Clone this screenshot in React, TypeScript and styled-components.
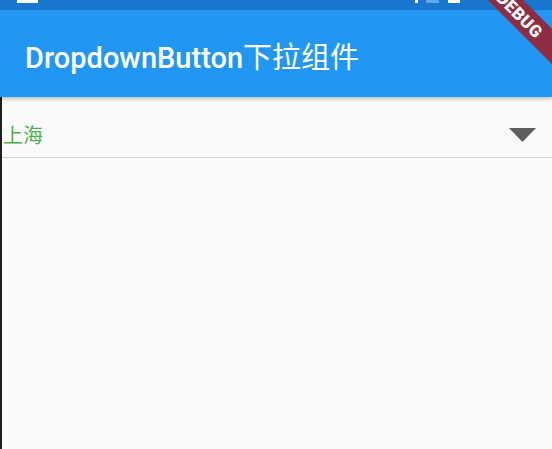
import React from "react";
import styled, { createGlobalStyle } from "styled-components";

const GlobalStyle = createGlobalStyle`
  html, body {
    margin: 0;
    padding: 0;
    background: #fafafa;
  }
  #root {
    min-height: 449px;
  }
`;

const Screen = styled.div`
  position: relative;
  width: 552px;
  height: 449px;
  overflow: hidden;
  background: #fafafa;
  font-family: Roboto, "Noto Sans CJK SC", sans-serif;
`;

const StatusBar = styled.div`
  height: 10px;
  background: #1a77cf;
  position: relative;
`;

const StatusMark = styled.div<{ $left: number; $width: number; $color?: string }>`
  position: absolute;
  top: 0;
  left: ${(p) => p.$left}px;
  width: ${(p) => p.$width}px;
  height: 3px;
  background: ${(p) => p.$color || "#ffffff"};
`;

const AppBar = styled.header`
  height: 87px;
  background: #2196f3;
  display: flex;
  align-items: center;
  padding: 2px 0 0 25px;
  box-sizing: border-box;
  box-shadow: 0 2px 4px rgba(0, 0, 0, 0.25);
  position: relative;
  z-index: 1;
`;

const Title = styled.h1`
  margin: 0;
  color: #ffffff;
  font-family: Roboto, "Noto Sans CJK SC", sans-serif;
  font-size: 29px;
  font-weight: 500;
  letter-spacing: 0;
`;

const TitleCjk = styled.span`
  font-family: "Noto Sans CJK SC", sans-serif;
  font-weight: 400;
`;

const Body = styled.main`
  border-left: 2px solid #1e1e1e;
  height: 352px;
  box-sizing: border-box;
`;

const Dropdown = styled.div`
  height: 61px;
  display: flex;
  align-items: center;
  justify-content: space-between;
  padding: 16px 16px 0 1px;
  border-bottom: 1px solid #d6d6d6;
  box-sizing: border-box;
`;

const Selected = styled.span`
  color: #4caf50;
  font-family: "Noto Sans CJK SC", sans-serif;
  font-size: 20px;
  line-height: 1;
`;

const Arrow = styled.svg`
  width: 27px;
  height: 14px;
  display: block;
`;

const Banner = styled.div`
  position: absolute;
  top: 2px;
  right: -48px;
  width: 160px;
  height: 25px;
  background: #8c2d44;
  transform: rotate(45deg);
  display: flex;
  align-items: center;
  justify-content: center;
  color: #ffffff;
  font-family: Roboto, sans-serif;
  font-weight: 900;
  font-size: 17px;
  letter-spacing: 0.5px;
  z-index: 3;
`;

export default function App() {
  return (
    <>
      <GlobalStyle />
      <Screen>
        <StatusBar>
          <StatusMark $left={17} $width={21} />
          <StatusMark $left={415} $width={3} />
          <StatusMark $left={426} $width={13} $color="#5ea9ea" />
          <StatusMark $left={448} $width={12} />
        </StatusBar>
        <AppBar>
          <Title>
            DropdownButton<TitleCjk>下拉组件</TitleCjk>
          </Title>
        </AppBar>
        <Body>
          <Dropdown>
            <Selected>上海</Selected>
            <Arrow viewBox="0 0 27 14">
              <path d="M0 0 L27 0 L13.5 14 Z" fill="#5e5e5e" />
            </Arrow>
          </Dropdown>
        </Body>
        <Banner>DEBUG</Banner>
      </Screen>
    </>
  );
}
